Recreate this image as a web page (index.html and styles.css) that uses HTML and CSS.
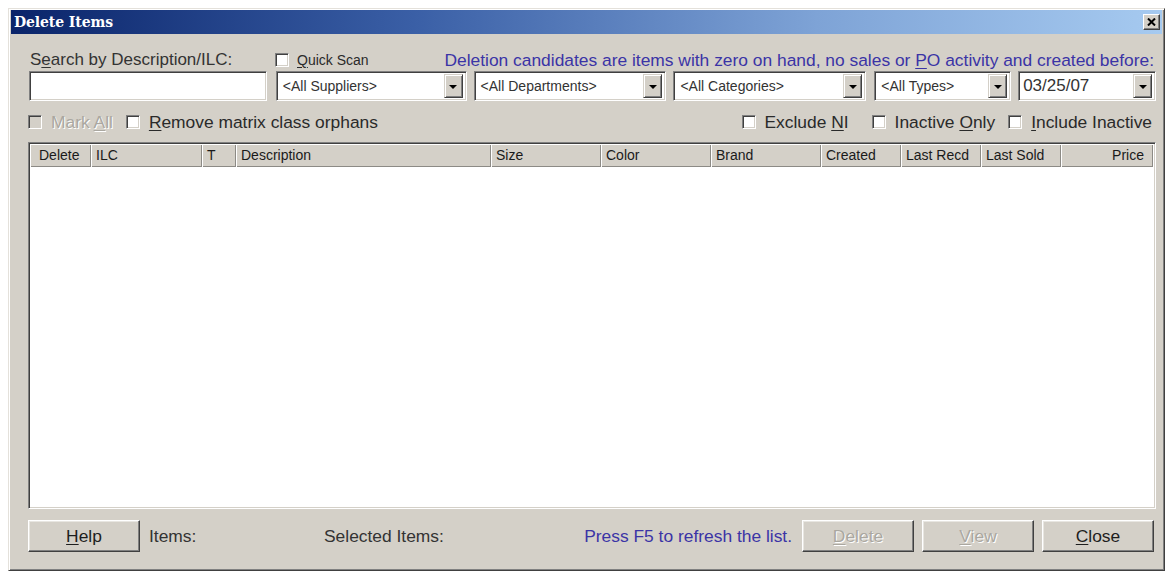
FILE: index.html
```html
<!DOCTYPE html>
<html lang="en">
<head>
<meta charset="utf-8">
<title>Delete Items</title>
<link rel="stylesheet" href="styles.css">
</head>
<body>
<div class="window">
  <div class="titlebar">
    <span class="title">Delete Items</span>
    <span class="close-btn">
      <svg width="9" height="8" viewBox="0 0 9 8"><path d="M1 0.5 L8 7.5 M8 0.5 L1 7.5" stroke="#000" stroke-width="2"/></svg>
    </span>
  </div>

  <div class="content">
    <div class="row-labels">
      <span class="search-label">S<u>e</u>arch by Description/ILC:</span>
      <span class="check small"><span class="box"></span><span><u>Q</u>uick Scan</span></span>
      <span class="note">Deletion candidates are items with zero on hand, no sales or <u>P</u>O activity and created before:</span>
    </div>

    <div class="row-fields">
      <div class="textbox search-box"></div>
      <div class="combo combo-suppliers"><span class="combo-text">&lt;All Suppliers&gt;</span><span class="drop"><span class="arrow"></span></span></div>
      <div class="combo combo-departments"><span class="combo-text">&lt;All Departments&gt;</span><span class="drop"><span class="arrow"></span></span></div>
      <div class="combo combo-categories"><span class="combo-text">&lt;All Categories&gt;</span><span class="drop"><span class="arrow"></span></span></div>
      <div class="combo combo-types"><span class="combo-text">&lt;All Types&gt;</span><span class="drop"><span class="arrow"></span></span></div>
      <div class="combo combo-date"><span class="combo-text date-text">03/25/07</span><span class="drop"><span class="arrow"></span></span></div>
    </div>

    <div class="row-options">
      <span class="check disabled"><span class="box"></span><span>Mark <u>A</u>ll</span></span>
      <span class="check orphans"><span class="box"></span><span><u>R</u>emove matrix class orphans</span></span>
      <span class="spacer"></span>
      <span class="check"><span class="box"></span><span>Exclude <u>N</u>I</span></span>
      <span class="check inactive-only"><span class="box"></span><span>Inactive <u>O</u>nly</span></span>
      <span class="check include-inactive"><span class="box"></span><span><u>I</u>nclude Inactive</span></span>
    </div>

    <div class="list">
      <div class="list-head">
        <span class="col col-delete">Delete</span>
        <span class="col col-ilc">ILC</span>
        <span class="col col-t">T</span>
        <span class="col col-desc">Description</span>
        <span class="col col-size">Size</span>
        <span class="col col-color">Color</span>
        <span class="col col-brand">Brand</span>
        <span class="col col-created">Created</span>
        <span class="col col-recd">Last Recd</span>
        <span class="col col-sold">Last Sold</span>
        <span class="col col-price">Price</span>
      </div>
    </div>

    <div class="row-actions">
      <button class="btn"><u>H</u>elp</button>
      <span class="items-label">Items:</span>
      <span class="selected-label">Selected Items:</span>
      <span class="hint">Press F5 to refresh the list.</span>
      <button class="btn btn-delete" disabled><u>D</u>elete</button>
      <button class="btn" disabled><u>V</u>iew</button>
      <button class="btn"><u>C</u>lose</button>
    </div>
  </div>
</div>
</body>
</html>
```

FILE: styles.css
```css
* { box-sizing: border-box; }

html, body {
  margin: 0;
  background: #ffffff;
}

body {
  font-family: "Liberation Sans", Arial, sans-serif;
  color: #262626;
}

u { text-decoration: underline; text-underline-offset: 2px; }

/* dialog frame */
.window {
  width: 1157px;
  height: 563px;
  margin: 8px 0 0 8px;
  background: #d4d0c8;
  border: 1px solid;
  border-color: #e4e1db #404040 #404040 #e4e1db;
  box-shadow: inset 1px 1px #ffffff, inset -1px -1px #808080;
  padding: 1px 2px 2px 2px;
  display: flex;
  flex-direction: column;
}

.titlebar {
  height: 24px;
  flex: none;
  display: flex;
  align-items: center;
  justify-content: space-between;
  background: linear-gradient(to right, #0a246a 0%, #3a5fa6 35%, #7ea3d6 70%, #a6caf0 100%);
  padding: 0 2px 0 3px;
}

.title {
  font-family: "DejaVu Serif", "Liberation Serif", serif;
  font-weight: bold;
  font-size: 14px;
  color: #ffffff;
  letter-spacing: -0.1px;
}

.close-btn {
  width: 17px;
  height: 16px;
  background: #d4d0c8;
  border: 1px solid;
  border-color: #ffffff #404040 #404040 #ffffff;
  box-shadow: inset -1px -1px #808080;
  display: flex;
  align-items: center;
  justify-content: center;
  padding-bottom: 1px;
}

.close-btn svg { display: block; }

.content {
  flex: 1;
  display: flex;
  flex-direction: column;
  padding: 17px 6px 0 17px;
}

/* first line: captions */
.row-labels {
  height: 18px;
  display: flex;
  align-items: center;
  font-size: 17.4px;
}

.search-label {
  width: 247px;
  padding-left: 2px;
  font-size: 17px;
  color: #333333;
}

.check {
  display: inline-flex;
  align-items: center;
  gap: 9px;
  font-size: 17.4px;
  color: #2a2a2a;
}

.check.small {
  font-size: 14px;
  gap: 8px;
}

.box {
  width: 14px;
  height: 14px;
  flex: none;
  background: #ffffff;
  border: 1px solid;
  border-color: #808080 #ffffff #ffffff #808080;
  box-shadow: inset 1px 1px #404040, inset -1px -1px #d4d0c8;
}

.note {
  margin-left: auto;
  padding-right: 2px;
  color: #3b34a6;
}

/* second line: search box and filters */
.row-fields {
  height: 30px;
  margin-top: 2px;
  display: flex;
}

.textbox,
.combo {
  height: 30px;
  background: #ffffff;
  border: 1px solid;
  border-color: #808080 #ffffff #ffffff #808080;
  box-shadow: inset 1px 1px #404040, inset -1px -1px #d4d0c8;
}

.search-box { width: 238px; margin-left: 1px; }

.combo {
  display: flex;
  align-items: center;
  padding: 2px 3px 2px 2px;
  margin-left: 7px;
}

.combo-suppliers { width: 191px; margin-left: 9px; }
.combo-departments { width: 193px; }
.combo-categories { width: 193px; }
.combo-types { width: 137px; margin-left: 8px; }
.combo-date { width: 138px; }

.combo-text {
  flex: 1;
  font-size: 14px;
  color: #333333;
  padding-left: 4px;
  white-space: nowrap;
  overflow: hidden;
}

.combo-text.date-text {
  font-size: 17px;
  padding-left: 2px;
}

.drop {
  width: 19px;
  height: 24px;
  flex: none;
  background: #d4d0c8;
  border: 1px solid;
  border-color: #d4d0c8 #404040 #404040 #d4d0c8;
  box-shadow: inset 1px 1px #ffffff, inset -1px -1px #808080;
  display: flex;
  align-items: center;
  justify-content: center;
}

.arrow {
  width: 0;
  height: 0;
  border-left: 4px solid transparent;
  border-right: 4px solid transparent;
  border-top: 4px solid #000000;
  margin-top: 1px;
}

/* third line: option checkboxes */
.row-options {
  height: 18px;
  margin-top: 12px;
  display: flex;
  align-items: center;
  padding-left: 0;
  padding-right: 4px;
}

.row-options .check.orphans { margin-left: 13px; }
.row-options .check.inactive-only { margin-left: 23px; }
.row-options .check.include-inactive { margin-left: 13px; }
.row-options .spacer { flex: 1; }

.check.disabled { color: #aaa7a0; text-shadow: 1px 1px #ffffff; }
.check.disabled .box { background: #d4d0c8; }

/* item list */
.list {
  height: 367px;
  margin-top: 11px;
  background: #ffffff;
  border: 1px solid;
  border-color: #808080 #ffffff #ffffff #808080;
  box-shadow: inset 1px 1px #404040, inset -1px -1px #d4d0c8;
  padding: 1px 2px 2px 1px;
}

.list-head {
  height: 23px;
  display: grid;
  grid-template-columns: 61px 111px 34px 255px 110px 110px 110px 80px 80px 80px 92px;
}

.col {
  background: #d4d0c8;
  box-shadow: inset 1px 1px #ffffff, inset -1px -1px #8c8a85;
  font-size: 14px;
  color: #1a1a1a;
  line-height: 23px;
  padding-left: 5px;
  white-space: nowrap;
}

.col-delete { padding-left: 9px; }
.col-price { text-align: right; padding-right: 9px; }

/* bottom line: buttons */
.row-actions {
  height: 32px;
  margin-top: 11px;
  display: flex;
  align-items: center;
  font-size: 17.4px;
  padding-right: 2px;
}

.btn {
  width: 112px;
  height: 32px;
  font-family: inherit;
  font-size: 17.4px;
  color: #1e1e1e;
  background: #d4d0c8;
  border: 1px solid;
  border-color: #ffffff #404040 #404040 #ffffff;
  box-shadow: inset -1px -1px #808080, inset 1px 1px #e8e6e1;
  padding: 0;
  margin: 0;
}

.btn:disabled {
  color: #aaa7a0;
  text-shadow: 1px 1px #ffffff;
}

.btn + .btn { margin-left: 8px; }
.btn-delete { margin-left: 10px; }

.items-label {
  width: 175px;
  margin-left: 9px;
  color: #333333;
}

.selected-label { color: #333333; }

.hint {
  margin-left: auto;
  color: #3b34a6;
}
```
